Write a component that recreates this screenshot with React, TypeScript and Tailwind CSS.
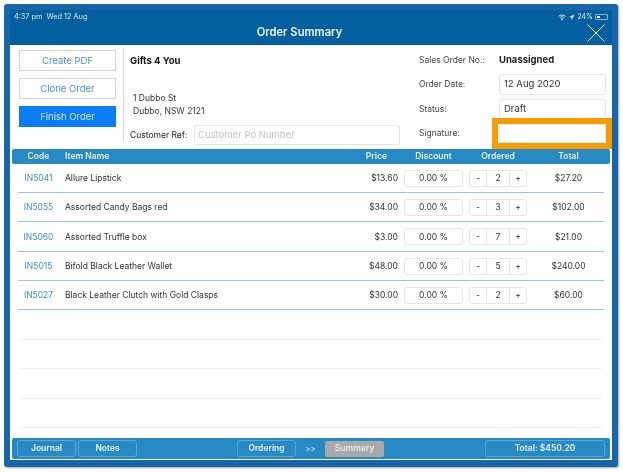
const rows = [
  { code: "IN5041", name: "Allure Lipstick", price: "$13.60", qty: "2", total: "$27.20" },
  { code: "IN5055", name: "Assorted Candy Bags red", price: "$34.00", qty: "3", total: "$102.00" },
  { code: "IN5060", name: "Assorted Truffle box", price: "$3.00", qty: "7", total: "$21.00" },
  { code: "IN5015", name: "Bifold Black Leather Wallet", price: "$48.00", qty: "5", total: "$240.00" },
  { code: "IN5027", name: "Black Leather Clutch with Gold Clasps", price: "$30.00", qty: "2", total: "$60.00" },
];

function Row({ r }: { r: (typeof rows)[number] }) {
  return (
    <div className="flex h-[29.4px] shrink-0 items-center border-b border-[#9cc6df] pt-[1px] text-[8.5px] text-[#333]">
      <div className="w-[47px] pr-[6px] text-center text-[#3d8fcf]">{r.code}</div>
      <div className="flex-1">{r.name}</div>
      <div className="w-[50px] text-right">{r.price}</div>
      <div className="ml-[6px] flex h-[17px] w-[59px] items-center justify-center rounded-[3px] border border-[#e6e6e6]">0.00 %</div>
      <div className="ml-[6px] flex h-[17px] w-[58px] items-center rounded-[3px] border border-[#e6e6e6]">
        <span className="w-[17px] border-r border-[#e6e6e6] text-center leading-[15px]">-</span>
        <span className="flex-1 text-center">{r.qty}</span>
        <span className="w-[17px] border-l border-[#e6e6e6] text-center leading-[15px]">+</span>
      </div>
      <div className="w-[77px] pl-[6px] text-center">{r.total}</div>
    </div>
  );
}

function TopButton({ label, active }: { label: string; active?: boolean }) {
  return (
    <div
      className={
        active
          ? "flex h-[21px] items-center justify-center border border-[#0a7cf0] bg-[#0a7cf5] pt-[1px] text-[9.5px] text-[#cfe5ff]"
          : "flex h-[21px] items-center justify-center border border-[#d4d4d4] bg-white pt-[1px] text-[9.5px] text-[#4a90d9]"
      }
    >
      {label}
    </div>
  );
}

function FootButton({ label, w }: { label: string; w: string }) {
  return (
    <div className={`flex h-[17px] items-center justify-center rounded-[3px] border border-[#5fa5d2] text-[8.5px] font-semibold text-[#e6f1f8] ${w}`}>
      {label}
    </div>
  );
}

export default function App() {
  return (
    <div
      className="h-[472px] w-[623px] bg-white pt-[4px] pl-[4px] blur-[0.35px]"
      style={{ fontFamily: "Inter, 'Open Sans', 'Liberation Sans', sans-serif" }}
    >
      <div className="flex h-[463px] w-[614px] flex-col rounded-[3px] bg-[#1666a9] px-[6px] pt-[6px] pb-[7px] shadow-[1px_1px_2px_rgba(0,0,0,0.35)]">
        <div className="relative flex h-[35px] shrink-0 items-end justify-center bg-[#015f9f] pr-[23px] pb-[4px] text-[11.2px] font-semibold text-[#f0f6fa]">
          <div className="absolute top-[2px] left-[4px] text-[7.3px] font-normal text-[#dbe8f2]">4:37 pm&nbsp;&nbsp;Wed 12 Aug</div>
          <div className="absolute top-[2px] right-[4px] flex items-center gap-[2px] text-[7px] font-normal text-[#dbe8f2]">
            <svg width="8" height="7" viewBox="0 0 24 20" fill="none" stroke="currentColor" strokeWidth="3">
              <path d="M1 7c6-6 16-6 22 0M5 11c4-4 10-4 14 0" />
              <path d="M12 19 8 14.500c2-2 6-2 8 0z" fill="currentColor" stroke="none" />
            </svg>
            <svg width="7" height="7" viewBox="0 0 24 24" fill="currentColor"><path d="M23 1 1 11h11v11z" /></svg>
            <span>24%</span>
            <span className="flex h-[6px] w-[13px] items-center rounded-[1px] border border-[#8fb3d0] p-[1px]">
              <span className="h-full w-[3px] bg-white" />
            </span>
          </div>
          <span>Order Summary</span>
          <svg className="absolute top-[14px] right-[7px]" width="18" height="18" viewBox="0 0 18 18" stroke="#eef5fa" strokeWidth="1" fill="none">
            <path d="M0.500 0.500 17.500 17.500M17.500 0.500 0.500 17.500" />
          </svg>
        </div>

        <div className="flex min-h-0 flex-1 flex-col bg-white">
          <div className="flex h-[104px] shrink-0 text-[8.5px] text-[#333]">
            <div className="flex w-[113px] shrink-0 flex-col gap-[7px] pt-[5px] pr-[7px] pl-[9px]">
              <TopButton label="Create PDF" />
              <TopButton label="Clone Order" />
              <TopButton label="Finish Order" active />
            </div>
            <div className="my-[3px] h-[93px] w-[1px] shrink-0 bg-[#d8d8d8]" />
            <div className="flex w-[277px] shrink-0 flex-col pl-[6px]">
              <div className="mt-[9px] text-[9.5px] font-bold text-[#111]">Gifts 4 You</div>
              <div className="mt-[24px] ml-[3px] leading-[13px]">
                1 Dubbo St
                <br />
                Dubbo, NSW 2121
              </div>
              <div className="mt-[7px] flex items-center gap-[4px]">
                <span className="w-[60px] text-[#222]">Customer Ref:</span>
                <div className="flex h-[20px] w-[206px] items-center rounded-[2px] border border-[#e6e6e6] px-[3px] text-[9.5px] text-[#c4c4c4]">
                  Customer Po Number
                </div>
              </div>
            </div>
            <div className="flex flex-1 flex-col pr-[6px] pl-[18px]">
              <div className="mt-[8px] flex h-[14px] items-center">
                <span className="w-[80px] text-[#444]">Sales Order No.:</span>
                <span className="text-[9.5px] font-bold text-[#222]">Unassigned</span>
              </div>
              <div className="mt-[7px] flex items-center">
                <span className="w-[80px] text-[#444]">Order Date:</span>
                <div className="flex h-[21px] w-[107px] items-center rounded-[3px] border border-[#e6e6e6] px-[4px] text-[9.5px]">12 Aug 2020</div>
              </div>
              <div className="mt-[4px] flex items-center">
                <span className="w-[80px] text-[#444]">Status:</span>
                <div className="flex h-[20px] w-[107px] items-center rounded-[3px] border border-[#e6e6e6] px-[4px] text-[9.5px]">Draft</div>
              </div>
              <div className="mt-[5px] flex items-center">
                <span className="w-[80px] text-[#444]">Signature:</span>
                <div className="relative h-[19px] w-[107px] rounded-[2px] border border-[#e6e6e6]">
                  <div className="absolute -top-[7px] -left-[8px] h-[31px] w-[120px] border-[6px] border-[#f79c00]" />
                </div>
              </div>
            </div>
          </div>

          <div className="mx-[2px] flex h-[14.5px] shrink-0 items-center rounded-[2px] bg-[#288ac5] text-[8.5px] font-semibold text-[#e6f1f8]">
            <div className="w-[47px] pl-[6px] text-center">Code</div>
            <div className="flex-1 pl-[6px]">Item Name</div>
            <div className="mr-[11px] w-[50px] text-right">Price</div>
            <div className="ml-[6px] w-[59px] text-center">Discount</div>
            <div className="ml-[6px] w-[58px] text-center">Ordered</div>
            <div className="w-[83px] text-center">Total</div>
          </div>

          <div className="flex min-h-0 flex-1 flex-col px-[8px]">
            {rows.map((r) => (
              <Row key={r.code} r={r} />
            ))}
            {[0, 1, 2, 3].map((i) => (
              <div key={i} className="mx-[2px] h-[29.4px] shrink-0 border-b border-[#f0f0f0]" />
            ))}
          </div>

          <div className="mx-[2px] mb-[1px] flex h-[21px] shrink-0 items-center rounded-[2px] bg-[#288ac5] px-[5px] text-[#e6f1f8]">
            <FootButton label="Journal" w="w-[59px]" />
            <div className="w-[2px]" />
            <FootButton label="Notes" w="w-[59px]" />
            <div className="w-[100px]" />
            <FootButton label="Ordering" w="w-[59px]" />
            <span className="w-[29px] text-center text-[8px]">&gt;&gt;</span>
            <div className="flex h-[16px] w-[59px] items-center justify-center rounded-[2px] bg-[#a9a9a9] text-[8.5px] font-semibold text-[#e8e8e8]">Summary</div>
            <div className="flex-1" />
            <FootButton label="Total: $450.20" w="w-[120px]" />
          </div>
        </div>
      </div>
    </div>
  );
}
